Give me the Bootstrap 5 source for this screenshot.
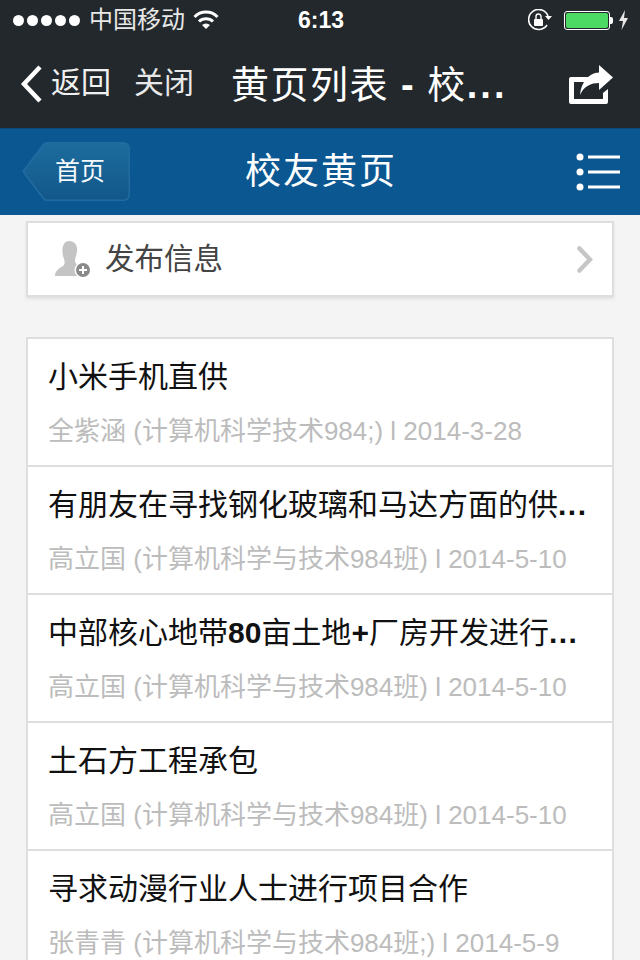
<!DOCTYPE html>
<html lang="zh-CN">
<head>
    <meta charset="UTF-8">
    <meta name="viewport" content="width=device-width, initial-scale=1.0">
    <title>校友黄页</title>
    <link href="https://cdn.jsdelivr.net/npm/bootstrap@5.3.0/dist/css/bootstrap.min.css" rel="stylesheet">
    <style>
        html, body { height: 960px; overflow: hidden; }
        body { width: 640px; background: #f4f4f4; font-family: "Liberation Sans", "Noto Sans CJK SC", sans-serif; }
        .phone-top { background: #22282c; color: #fff; height: 128px; }
        .status-bar { height: 40px; padding: 0 11px 0 13px; font-size: 25px; line-height: 40px; color: #e8e8e8; }
        .signal-dot { width: 11px; height: 11px; border-radius: 50%; background: #fff; margin-right: 3px; }
        .status-left { width: 285px; }
        .carrier { margin: 0 8px 0 6px; font-size: 24px; }
        .clock { font-weight: 700; font-size: 23px; color: #fff; }
        .status-right { width: 285px; }
        .batt { width: 46px; height: 19px; border: 1px solid #fff; border-radius: 3px; padding: 1px; margin-left: 12px; }
        .batt-fill { background: #4cd964; height: 100%; border-radius: 2px; }
        .batt-tip { width: 3px; height: 7px; background: #fff; border-radius: 0 2px 2px 0; margin-right: 5px; }
        .web-nav { height: 88px; padding: 0 27px 0 20px; }
        .web-nav .back-txt { font-size: 30px; line-height: 36px; color: #f0f0f0; margin: -2px 0 0 7px; width: 83px; }
        .web-nav .close-txt { font-size: 30px; line-height: 36px; color: #e8e8e8; margin-top: -2px; width: 97px; }
        .web-nav .page-title { font-size: 38px; font-weight: 400; letter-spacing: 1.500px; width: 320px; white-space: nowrap; margin: 4px 0 0; }
        .web-nav .page-title b { font-weight: 700; }
        .web-nav .page-title .title-dots { font-weight: 700; letter-spacing: 3px; }
        .blue-bar { height: 87px; background: #0b5791; color: #fff; padding: 0 20px 0 22px; border-top: 1px solid #0a4c80; }
        .bar-side { width: 107px; }
        .home-tag { position: relative; height: 60px; }
        .home-tag svg { position: absolute; left: 0; top: 0; }
        .home-tag span { position: absolute; left: 33px; top: 13px; font-size: 25px; line-height: 32px; color: #f4f8fb; }
        .bar-title { font-size: 36px; letter-spacing: 2px; line-height: 50px; margin: 0; font-weight: 400; }
        .publish-box { margin: 6px 26px 0 26px; height: 76px; padding: 0 19px 0 26px; background: #fff; border: 2px solid #dedede; box-shadow: 0 2px 3px rgba(0,0,0,.08); }
        .publish-box .pub-txt { font-size: 29.500px; color: #444; margin-left: 13px; }
        .info-list { margin: 40px 26px 0 26px; border: 2px solid #dedede; border-bottom: 0; background: #fff; }
        .info-row { height: 128px; padding: 19px 20px 0 20px; border-bottom: 2px solid #dedede; }
        .info-row .row-title { font-size: 30px; line-height: 38px; color: #111; white-space: nowrap; overflow: hidden; }
        .info-row .row-title b { font-size: 30px; }
        .info-row .row-meta { font-size: 26px; line-height: 34px; color: #bcbcbc; margin-top: 18px; white-space: nowrap; }
        .dots { font-weight: 700; letter-spacing: 1.500px; }
    </style>
</head>
<body>
    <div class="phone-top">
        <div class="status-bar d-flex align-items-center justify-content-between">
            <div class="status-left d-flex align-items-center">
                <span class="signal-dot"></span><span class="signal-dot"></span><span class="signal-dot"></span><span class="signal-dot"></span><span class="signal-dot"></span>
                <span class="carrier">中国移动</span>
                <svg width="26" height="20" viewBox="0 0 26 20"><path d="M1.500 7 A16 16 0 0 1 24.500 7" fill="none" stroke="#fff" stroke-width="3"/><path d="M6 11.500 A10 10 0 0 1 20 11.500" fill="none" stroke="#fff" stroke-width="3"/><path d="M9 15 L13 19 L17 15 A6 6 0 0 0 9 15Z" fill="#fff"/></svg>
            </div>
            <div class="clock">6:13</div>
            <div class="status-right d-flex align-items-center justify-content-end">
                <svg width="24" height="22" viewBox="0 0 24 22"><path d="M19 16 A10 10 0 1 1 20 7" fill="none" stroke="#fff" stroke-width="1.600"/><path d="M17 7 L24 7 L20.500 11Z" fill="#fff"/><rect x="6" y="10" width="9" height="7" rx="1" fill="#fff"/><path d="M8 10 V7.500 A2.500 2.500 0 0 1 13 7.500 V10" fill="none" stroke="#fff" stroke-width="1.400"/></svg>
                <div class="batt"><div class="batt-fill"></div></div>
                <div class="batt-tip"></div>
                <svg width="11" height="20" viewBox="0 0 11 20"><path d="M7 0 L1 11 H5 L3.500 20 L10 8 H6Z" fill="#e8e8e8"/></svg>
            </div>
        </div>
        <div class="web-nav d-flex align-items-center">
            <svg width="24" height="38" viewBox="0 0 24 38"><path d="M20 2 L4 19 L20 36" fill="none" stroke="#fff" stroke-width="4.500"/></svg>
            <span class="back-txt">返回</span>
            <span class="close-txt">关闭</span>
            <h1 class="page-title">黄页列表 <b>-</b> 校<span class="title-dots">...</span></h1>
            <svg class="ms-auto" width="44" height="39" viewBox="0 0 44 39"><path d="M2 12 Q0 12 0 14 V37 Q0 39 2 39 H37 Q39 39 39 37 V24 L34 28 V34 H5 V17 H16 L20 12Z" fill="#fff"/><path d="M30 0 L44 12.500 L30 25 V18 C22 18 15 21 11 30 C12 18 19 8 30 7.500Z" fill="#fff"/></svg>
        </div>
    </div>
    <div class="blue-bar d-flex align-items-center justify-content-between">
        <div class="bar-side home-tag">
            <svg width="110" height="60" viewBox="0 0 110 60"><defs><linearGradient id="tagFill" x1="0" y1="0" x2="0" y2="1"><stop offset="0" stop-color="#1c6c9d"/><stop offset="1" stop-color="#13578a"/></linearGradient></defs><path d="M2 29.500 L22 3 Q23 1.500 25 1.500 H101 Q106.500 1.500 106.500 7 V52 Q106.500 57.500 101 57.500 H25 Q23 57.500 22 56Z" fill="none" stroke="#3f86b5" stroke-opacity=".45" stroke-width="3"/><path d="M2 29.500 L22 3 Q23 1.500 25 1.500 H101 Q106.500 1.500 106.500 7 V52 Q106.500 57.500 101 57.500 H25 Q23 57.500 22 56Z" fill="url(#tagFill)"/></svg>
            <span>首页</span>
        </div>
        <h2 class="bar-title flex-fill text-center">校友黄页</h2>
        <div class="bar-side d-flex justify-content-end">
            <svg width="44" height="38" viewBox="0 0 44 38"><circle cx="4" cy="4" r="3.500" fill="#fff"/><circle cx="4" cy="19" r="3.500" fill="#fff"/><circle cx="4" cy="34" r="3.500" fill="#fff"/><rect x="12" y="2.500" width="32" height="3" fill="#fff"/><rect x="12" y="17.500" width="32" height="3" fill="#fff"/><rect x="12" y="32.500" width="32" height="3" fill="#fff"/></svg>
        </div>
    </div>
    <div class="publish-box d-flex align-items-center">
        <svg width="38" height="38" viewBox="0 0 38 38"><path d="M15 1 C21 1 24 6 23 12 C22 16 21 19 21 21 C21 24 25 25 27 27 L24 36 H1 C1 31 5 28 9 26 C11 25 11 22 10 19 C7 12 8 1 15 1Z" fill="#c4c4c4"/><circle cx="29" cy="30" r="8.500" fill="#fff"/><circle cx="29" cy="30" r="7" fill="#8a8a8a"/><path d="M25 30 H33 M29 26 V34" stroke="#fff" stroke-width="2"/></svg>
        <span class="pub-txt">发布信息</span>
        <svg class="ms-auto" width="16" height="27" viewBox="0 0 16 27"><path d="M2.500 2.500 L13 13.500 L2.500 24.500" fill="none" stroke="#c6c6c6" stroke-width="4.500" stroke-linecap="round"/></svg>
    </div>
    <div class="info-list">
        <div class="info-row">
            <div class="row-title">小米手机直供</div>
            <div class="row-meta">全紫涵 (计算机科学技术984;) l 2014-3-28</div>
        </div>
        <div class="info-row">
            <div class="row-title">有朋友在寻找钢化玻璃和马达方面的供<span class="dots">...</span></div>
            <div class="row-meta">高立国 (计算机科学与技术984班) l 2014-5-10</div>
        </div>
        <div class="info-row">
            <div class="row-title">中部核心地带<b>80</b>亩土地<b>+</b>厂房开发进行<span class="dots">...</span></div>
            <div class="row-meta">高立国 (计算机科学与技术984班) l 2014-5-10</div>
        </div>
        <div class="info-row">
            <div class="row-title">土石方工程承包</div>
            <div class="row-meta">高立国 (计算机科学与技术984班) l 2014-5-10</div>
        </div>
        <div class="info-row">
            <div class="row-title">寻求动漫行业人士进行项目合作</div>
            <div class="row-meta">张青青 (计算机科学与技术984班;) l 2014-5-9</div>
        </div>
    </div>
    <script src="https://cdn.jsdelivr.net/npm/bootstrap@5.3.0/dist/js/bootstrap.bundle.min.js"></script>
</body>
</html>
